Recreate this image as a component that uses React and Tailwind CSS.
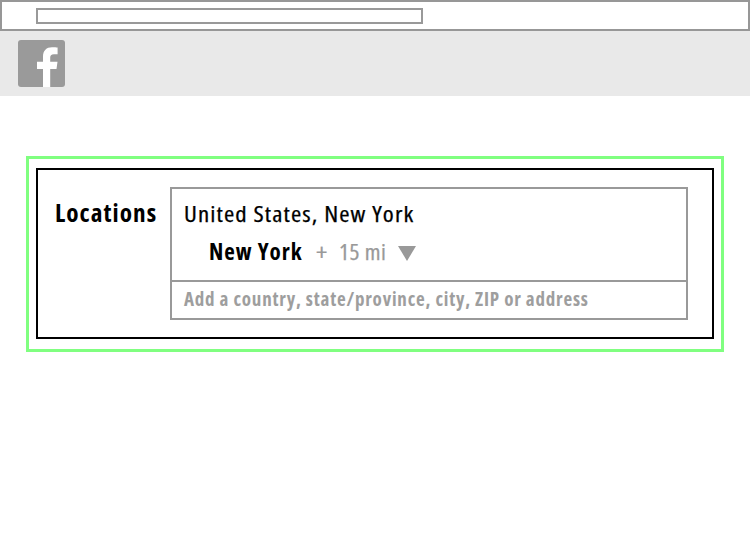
const face = "block w-max origin-left whitespace-nowrap leading-8 font-['Open_Sans','Noto_Sans',sans-serif] font-stretch-condensed";

function BrowserBar() {
  return (
    <div className="h-[31px] border-2 border-[#979797] bg-white pl-[34px] pt-1.5">
      <div className="h-4 w-[387px] border-2 border-[#999999]" />
    </div>
  );
}

function Logo() {
  return (
    <svg width="47" height="47" viewBox="0 0 47 47" aria-label="Facebook">
      <rect width="47" height="47" rx="3" fill="#9a9a9a" />
      <path
        d="M25 47V29h-6v-7.200h6v-5.300C25 10.500 28.500 7.200 34 7.200c2.400 0 4.500.2 5.600.3v6.700h-3.600c-2.900 0-3.800 1.500-3.800 3.500v4.100h7.300l-1 7.200h-6.300v18z"
        fill="#fff"
      />
    </svg>
  );
}

export default function App() {
  return (
    <div className="h-[550px] w-[750px] overflow-hidden bg-white">
      <BrowserBar />
      <header className="h-[65px] bg-[#e9e9e9] pl-[18px] pt-[9px]">
        <Logo />
      </header>
      <main className="ml-[26px] mt-[60px] h-[196px] w-[698px] border-3 border-[#80ff80] pl-[7px] pt-[9px]">
        <section className="flex h-[171px] w-[678px] border-2 border-black pt-[17px]">
          <div className="w-[132px] shrink-0 pl-[17px] pt-[10px]">
            <span className={face + " scale-x-[1.050] text-[24px] font-bold tracking-[1px]"}>Locations</span>
          </div>
          <div className="h-[133px] w-[518px] border-2 border-[#999999]">
            <div className="h-[93px] border-b-2 border-[#999999] pl-3 pt-2">
              <div className="h-[38px] pt-px">
                <span className={face + " scale-x-[1.105] text-[22.500px] tracking-[1px] [-webkit-text-stroke:0.25px_black]"}>United States, New York</span>
              </div>
              <div className="flex pl-[25px]">
                <div className="w-[107px]">
                  <span className={face + " text-[23px] font-bold tracking-[1px]"}>New York</span>
                </div>
                <div className="w-[23px] pt-px">
                  <span className={face + " scale-x-[1.150] text-[23px] text-[#999999] [-webkit-text-stroke:0.2px_#999999]"}>+</span>
                </div>
                <div className="w-[59px] pt-px">
                  <span className={face + " scale-x-[1.040] text-[22.500px] tracking-[0.500px] text-[#999999] [-webkit-text-stroke:0.25px_#999999]"}>15 mi</span>
                </div>
                <svg className="mt-[11px]" width="18" height="15" viewBox="0 0 18 15">
                  <path d="M0 0h18L9 15z" fill="#999999" />
                </svg>
              </div>
            </div>
            <div className="pl-3 pt-px">
              <span className={face + " text-[19px] font-bold tracking-[0.800px] text-[#9e9e9e]"}>
                Add a country, state/province, city, ZIP or address
              </span>
            </div>
          </div>
        </section>
      </main>
    </div>
  );
}
